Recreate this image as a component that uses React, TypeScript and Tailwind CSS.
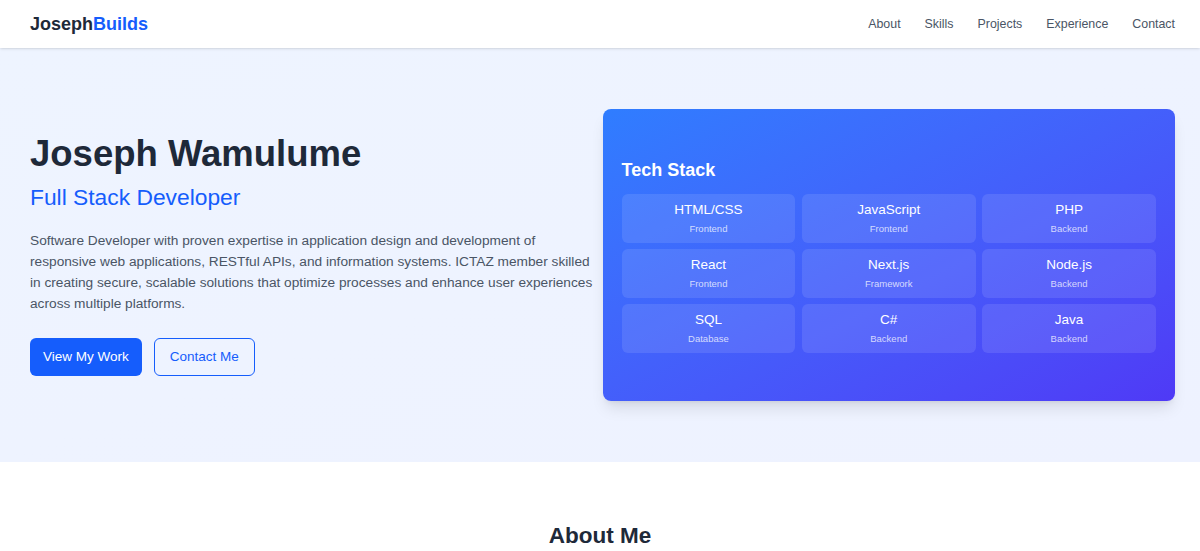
import React from "react";

const stack = [
  { name: "HTML/CSS", type: "Frontend" },
  { name: "JavaScript", type: "Frontend" },
  { name: "PHP", type: "Backend" },
  { name: "React", type: "Frontend" },
  { name: "Next.js", type: "Framework" },
  { name: "Node.js", type: "Backend" },
  { name: "SQL", type: "Database" },
  { name: "C#", type: "Backend" },
  { name: "Java", type: "Backend" },
];

export default function App() {
  return (
    <div className="min-h-screen bg-white font-['Liberation_Sans',Arial,sans-serif] text-[#1e2939]">
      <header className="relative z-10 h-12 bg-white shadow-sm">
        <div className="flex h-full items-center justify-between pl-[30px] pr-[25px]">
          <div className="text-[18px] font-bold leading-7 text-[#1e2939]">
            Joseph<span className="text-[#155dfc]">Builds</span>
          </div>
          <nav className="flex items-center gap-6 text-[12.4px] text-[#4a5565]">
            <a href="#about">About</a>
            <a href="#skills">Skills</a>
            <a href="#projects">Projects</a>
            <a href="#experience">Experience</a>
            <a href="#contact">Contact</a>
          </nav>
        </div>
      </header>

      <section className="bg-gradient-to-br from-[#eef4ff] to-[#eef2ff] pt-[61px] pb-[61px]">
        <div className="grid grid-cols-2 items-center pl-[30px] pr-[25px]">
          <div>
            <h1 className="mb-[7px] text-[36.5px] font-bold leading-10 text-[#1e2939]">Joseph Wamulume</h1>
            <h2 className="mb-[17px] text-[22.8px] leading-8 text-[#155dfc]">Full Stack Developer</h2>
            <p className="mb-6 text-[13.7px] leading-[21px] text-[#4a5565]">
              Software Developer with proven expertise in application design and development of responsive web
              applications, RESTful APIs, and information systems. ICTAZ member skilled in creating secure,
              scalable solutions that optimize processes and enhance user experiences across multiple platforms.
            </p>
            <div className="flex gap-3">
              <a className="rounded-md bg-[#155dfc] px-[13px] py-[9px] text-[13.5px] leading-5 text-white" href="#projects">
                View My Work
              </a>
              <a
                className="rounded-md border border-[#155dfc] px-[15px] py-[8px] text-[13.5px] leading-5 text-[#155dfc]"
                href="#contact"
              >
                Contact Me
              </a>
            </div>
          </div>

          <div className="rounded-lg bg-gradient-to-br from-[#2f7dff] to-[#4f39f6] px-[19px] pt-[47px] pb-12 shadow-lg">
            <h3 className="mb-[10px] text-[18px] font-bold leading-7 text-white">Tech Stack</h3>
            <div className="grid grid-cols-3 gap-[6.5px]">
              {stack.map((s) => (
                <div key={s.name} className="rounded-md bg-white/10 pt-[6px] pb-[5.5px] text-center">
                  <div className="text-[13.5px] leading-5 text-white">{s.name}</div>
                  <div className="mt-[1px] text-[9.5px] leading-4 text-white/75">{s.type}</div>
                </div>
              ))}
            </div>
          </div>
        </div>
      </section>

      <section id="about" className="bg-white pt-[59px] pb-16">
        <h2 className="text-center text-[22.5px] font-bold leading-[29px] text-[#1e2939]">About Me</h2>
      </section>
    </div>
  );
}
